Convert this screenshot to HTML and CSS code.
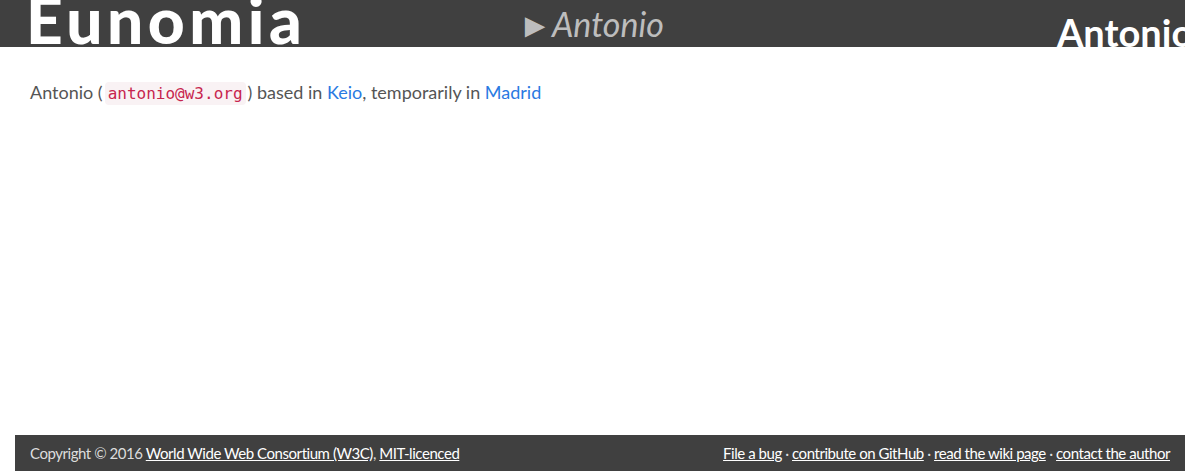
FILE: index.html
```html
<!DOCTYPE html>
<html>
    <head>
        <title>Eunomia - Antonio</title>
        <link rel="stylesheet" href="styles.css">
    </head>

    <body>
        <div id="page">
            <header id="masthead">
                <h1 class="logo">Eunomia</h1>
                <p class="crumb">&#9658;Antonio</p>
                <h2 class="title">Antonio</h2>
            </header>

            <main id="content">
                <p>Antonio (<code>antonio@w3.org</code>) based in <a href="#">Keio</a>, temporarily in <a href="#">Madrid</a></p>
            </main>

            <footer id="footer">
                <p>Copyright &copy; 2016 <a href="#">World Wide Web Consortium (W3C)</a>, <a href="#">MIT-licenced</a></p>
                <p><a href="#">File a bug</a> &middot; <a href="#">contribute on GitHub</a> &middot; <a href="#">read the wiki page</a> &middot; <a href="#">contact the author</a></p>
            </footer>
        </div>
    </body>
</html>
```

FILE: styles.css
```css
html,body{margin: 0;padding: 0;background: #fff;}
body{font-family: Lato, "Open Sans", sans-serif;font-size: 18px;color: #555;}
#page{width: 1185px;min-height: 100vh;display: flex;flex-direction: column;}
a{color: #2a7ae2;text-decoration: none;}

#masthead{background: #404040;height: 47px;display: flex;align-items: flex-end;overflow: hidden;white-space: nowrap;}
#masthead h1,#masthead h2,#masthead p{margin: 0;flex-shrink: 0;}
.logo{font-size: 64px;font-weight: 900;color: #fff;line-height: 47px;margin-left: 26px !important;letter-spacing: 4.5px;position: relative;top: -4px;}
.crumb{font-size: 34px;font-style: italic;font-weight: 400;color: #bdbdbd;line-height: 47px;margin-left: 212px !important;position: relative;top: 0;}
.crumb::first-letter{font-style: normal;}
.title{font-size: 38px;font-weight: 700;color: #fff;line-height: 38px;margin-left: 393px !important;position: relative;top: 4px;}

#content{padding: 0 30px;flex: 1;}
#content p{margin: 33px 0 0;line-height: 24px;}
code{font-family: "DejaVu Sans Mono", monospace;font-size: 16px;color: #c7254e;background: #f9f2f4;padding: 2px 3px;border-radius: 4px;margin: 0 2px;}

#footer{background: #404040;margin-left: 15px;height: 36px;display: flex;justify-content: space-between;align-items: center;padding: 0 15px;font-size: 15px;letter-spacing: -0.45px;color: #ddd;}
#footer p{margin: 0;}
#footer a{color: #fff;text-decoration: underline;}
```
